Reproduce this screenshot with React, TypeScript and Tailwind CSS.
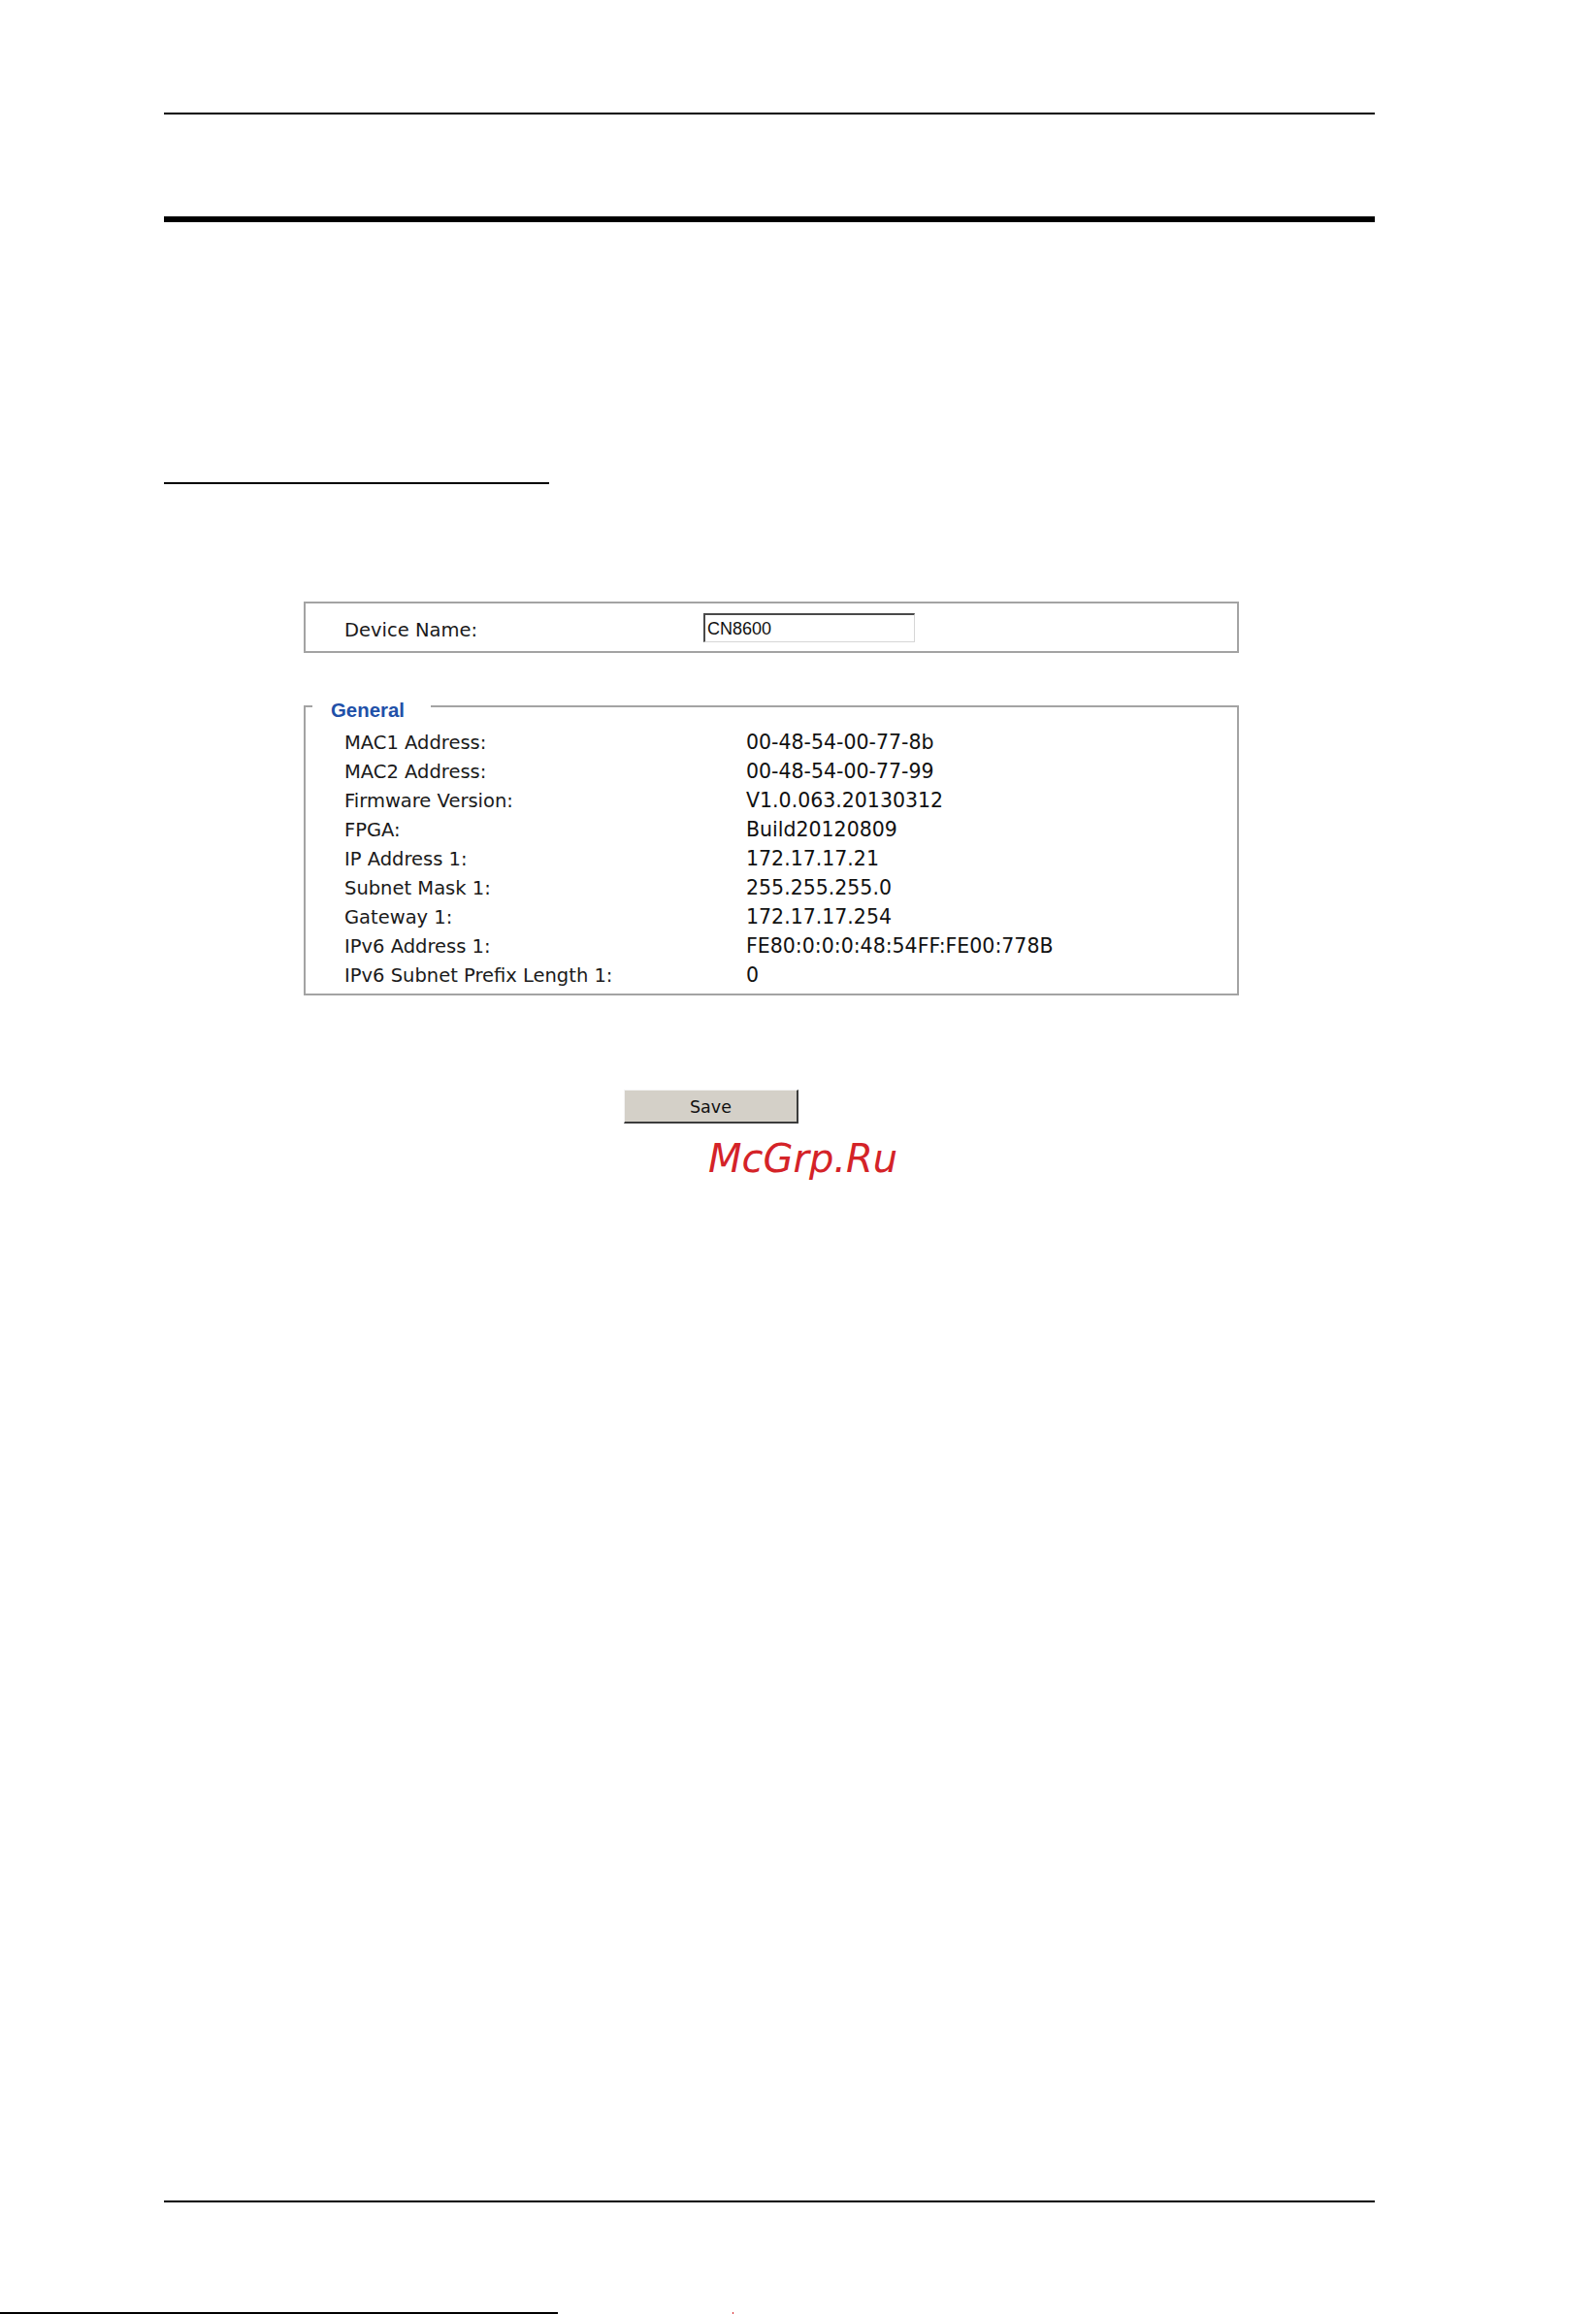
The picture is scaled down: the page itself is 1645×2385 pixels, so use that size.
import React from "react";

const rows: [string, string][] = [
  ["MAC1 Address:", "00-48-54-00-77-8b"],
  ["MAC2 Address:", "00-48-54-00-77-99"],
  ["Firmware Version:", "V1.0.063.20130312"],
  ["FPGA:", "Build20120809"],
  ["IP Address 1:", "172.17.17.21"],
  ["Subnet Mask 1:", "255.255.255.0"],
  ["Gateway 1:", "172.17.17.254"],
  ["IPv6 Address 1:", "FE80:0:0:0:48:54FF:FE00:778B"],
  ["IPv6 Subnet Prefix Length 1:", "0"],
];

export default function App() {
  return (
    <div className="relative h-[2385px] w-[1645px] overflow-hidden bg-white text-[#1a1a1a]">
      <div className="ml-[169px] flex h-[2385px] w-[1248px] flex-col pt-[116px]">
        <div className="h-[2px] bg-black" />
        <div className="mt-[105px] h-[6px] bg-black" />
        <div className="mt-[268px] h-[2px] w-[397px] bg-black" />

        <div className="ml-[144px] mt-[121px] w-[964px]">
          <div className="flex h-[53px] items-center border-2 border-[#a3a3a3] pl-[40px]">
            <span className="w-[370px] pt-[5px] font-['DejaVu_Sans',sans-serif] text-[19.5px] leading-[23px]">
              Device Name:
            </span>
            <input
              readOnly
              defaultValue="CN8600"
              className="h-[30px] w-[218px] border-b border-l-2 border-r border-t-2 border-b-[#d6d6d6] border-l-[#4a4a4a] border-r-[#d6d6d6] border-t-[#4a4a4a] bg-white pl-[2px] pt-[2px] font-['Liberation_Sans',sans-serif] text-[18px] text-[#111] outline-none"
            />
          </div>

          <fieldset className="mt-[40px] border-2 border-[#a3a3a3] pb-[4px]">
            <legend className="ml-[7px] pl-[19px] pr-[27px] pt-[8px] font-['Liberation_Sans',sans-serif] text-[20.4px] font-bold leading-[22px] text-[#2150a8]">
              General
            </legend>
            <div className="pl-[40px] pt-[7px]">
              {rows.map(([label, value]) => (
                <div key={label} className="flex h-[30px] items-baseline">
                  <span className="w-[414px] font-['DejaVu_Sans',sans-serif] text-[19.5px] leading-[30px]">
                    {label}
                  </span>
                  <span className="font-['DejaVu_Sans',sans-serif] text-[20.5px] leading-[30px] text-[#111]">
                    {value}
                  </span>
                </div>
              ))}
            </div>
          </fieldset>
        </div>

        <div className="ml-[474px] mt-[97px]">
          <button className="flex h-[35px] w-[180px] items-center justify-center border-b-2 border-l border-r-2 border-t border-b-[#3c3c3c] border-l-[#f4f4f4] border-r-[#3c3c3c] border-t-[#f4f4f4] bg-[#d4d0c8] pt-[3px] font-['DejaVu_Sans',sans-serif] text-[17.5px] text-[#111]">
            Save
          </button>
        </div>

        <div className="ml-[561px] mt-[13px] font-['DejaVu_Sans',sans-serif] text-[40px] italic leading-[47px] text-[#d42328]">
          McGrp.Ru
        </div>

        <div className="mt-auto mb-[115px] h-[2px] bg-black" />
      </div>
      <div className="absolute bottom-0 left-0 flex items-end">
        <div className="h-[2px] w-[575px] bg-black" />
        <div className="ml-[180px] h-[2px] w-[1px] bg-[#d8262b]" />
      </div>
    </div>
  );
}
